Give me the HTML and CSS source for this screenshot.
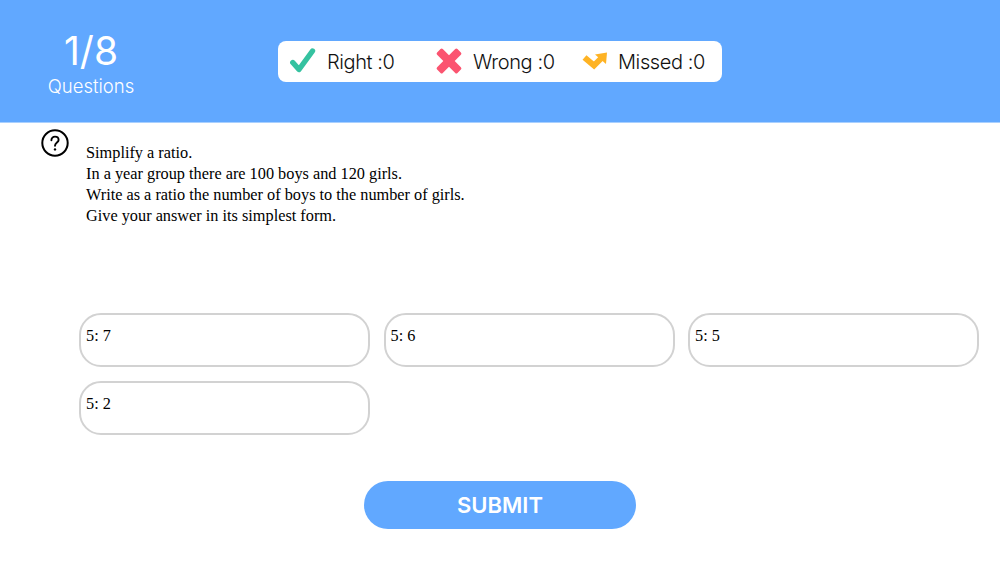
FILE: index.html
```html
<!DOCTYPE html>
<html lang="en">
<head>
  <meta charset="UTF-8" />
  <title>Quiz</title>
  <link rel="stylesheet" href="styles.css">
</head>
<body>

  <!-- Score header -->
  <header class="quiz-header">
    <div class="counter">
      <div class="counter-value">1/8</div>
      <div class="counter-label">Questions</div>
    </div>

    <div class="score-card">
      <div class="score-item score-right">
        <svg class="score-icon" viewBox="0 0 28 28" width="28" height="28">
          <path d="M3.8 15.5L10 22.5L23.5 4" fill="none" stroke="#35c2a0" stroke-width="5.4" stroke-linecap="round" stroke-linejoin="round"/>
        </svg>
        <span>Right :0</span>
      </div>
      <div class="score-item score-wrong">
        <svg class="score-icon" viewBox="0 0 28 28" width="28" height="28">
          <g fill="#fb5470" transform="rotate(45 14 14)">
            <rect x="-0.4" y="10" width="28.8" height="8" rx="1.6"/>
            <rect x="10" y="-0.4" width="8" height="28.8" rx="1.6"/>
          </g>
        </svg>
        <span>Wrong :0</span>
      </div>
      <div class="score-item score-missed">
        <svg class="score-icon" viewBox="0 0 28 28" width="28" height="28">
          <path d="M4.5 10.5L14 18.5L22 10.5" fill="none" stroke="#feb324" stroke-width="6"/>
          <path d="M15 7.5L27 5.5L26 17Z" fill="#feb324"/>
        </svg>
        <span>Missed :0</span>
      </div>
    </div>
  </header>

  <main class="quiz-body">
    <!-- Question -->
    <section class="question">
      <svg class="help-icon" viewBox="0 0 28 28" width="28" height="28">
        <circle cx="14" cy="14" r="12.7" fill="none" stroke="#000" stroke-width="2"/>
        <path d="M10.4 11.2C10.4 9 12 7.6 14 7.6C16.1 7.6 17.6 9 17.6 10.9C17.6 13.4 14 13.8 14 16.8" fill="none" stroke="#000" stroke-width="1.9" stroke-linecap="round"/>
        <circle cx="14" cy="20.4" r="1.2" fill="#000"/>
      </svg>
      <div class="question-text">
        <p>Simplify a ratio.</p>
        <p>In a year group there are 100 boys and 120 girls.</p>
        <p>Write as a ratio the number of boys to the number of girls.</p>
        <p>Give your answer in its simplest form.</p>
      </div>
    </section>

    <!-- Answer options -->
    <section class="options">
      <div class="option">5: 7</div>
      <div class="option">5: 6</div>
      <div class="option">5: 5</div>
      <div class="option">5: 2</div>
    </section>

    <button class="submit-btn">SUBMIT</button>
  </main>

</body>
</html>
```

FILE: styles.css
```css
body {
  margin: 0;
  padding: 0;
  background-color: #fff;
  color: #000;
  font-family: 'Liberation Serif', serif;
}

/* Header bar */
.quiz-header {
  height: 122px;
  background-color: #61a8ff;
  border-bottom: 1px solid #a9d0ff;
  display: flex;
  align-items: center;
  position: relative;
  justify-content: center;
  font-family: 'Inter', sans-serif;
}

.counter {
  width: 182px;
  text-align: center;
  color: #fff;
  position: absolute;
  left: 0;
  top: 26px;
}

.counter-value {
  font-size: 39px;
  line-height: 50px;
  font-weight: 400;
}

.counter-label {
  font-size: 18.5px;
  line-height: 20px;
  font-weight: 300;
}

/* Right / Wrong / Missed card */
.score-card {
  width: 444px;
  height: 41px;
  box-sizing: border-box;
  padding-left: 11px;
  background-color: #fff;
  border-radius: 8px;
  display: flex;
  align-items: center;
}

.score-item {
  display: flex;
  align-items: center;
  gap: 10px;
  font-size: 20px;
  letter-spacing: -0.4px;
  font-weight: 300;
  color: #111;
}

.score-item span {
  padding-top: 2px;
}

.score-right {
  width: 146px;
}

.score-wrong {
  width: 145px;
}

/* Question */
.quiz-body {
  padding: 6px 21px 0 79px;
}

.question {
  display: flex;
  height: 184px;
  margin-left: -38px;
}

.help-icon {
  flex-shrink: 0;
}

.question-text {
  margin: 13px 0 0 17px;
  font-size: 16.3px;
  line-height: 21px;
}

.question-text p {
  margin: 0;
}

/* Options grid */
.options {
  display: grid;
  grid-template-columns: repeat(3, 291px);
  column-gap: 13.5px;
  row-gap: 14px;
}

.option {
  height: 54px;
  box-sizing: border-box;
  padding: 10px 5px;
  border: 2px solid #d2d2d2;
  border-radius: 22px;
  font-size: 16.3px;
  line-height: 21px;
}

/* Submit */
.submit-btn {
  display: block;
  width: 272px;
  height: 48px;
  margin: 46px 0 0 285px;
  background-color: #61a8ff;
  border: none;
  border-radius: 24px;
  color: #fff;
  font-family: 'Inter', sans-serif;
  font-size: 22px;
  font-weight: 600;
  cursor: pointer;
}
```
